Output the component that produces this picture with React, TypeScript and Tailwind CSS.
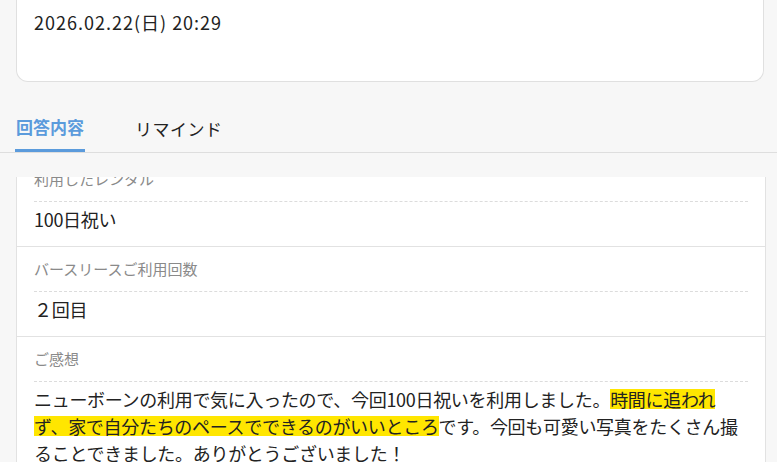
const rows = [
  { label: "利用したレンタル", value: "100日祝い" },
  { label: "バースリースご利用回数", value: "２回目" },
];

const Row = ({ label, children }: { label: string; children: React.ReactNode }) => {
  return (
    <div className="border-b border-[#e2e2e2] px-[17px] pt-[11px]">
      <p className="border-b border-dashed border-[#dcdcdc] pb-[11px] text-[15px] leading-[22px] text-[#8a8a8a]">
        {label}
      </p>
      <div className="pt-[4px] pb-[13px] text-[18px] leading-[27px] tracking-[-0.3px] text-[#222]">{children}</div>
    </div>
  );
};

const App = () => {
  return (
    <div
      className="h-[462px] w-full overflow-hidden bg-[#f7f7f7]"
      style={{ fontFamily: '"Noto Sans CJK JP", "Noto Sans", sans-serif' }}
    >
      <div className="ml-4 h-[82px] w-[748px] rounded-b-[12px] border border-t-0 border-[#e0e0e0] bg-white px-[17px] pt-[9px]">
        <p className="text-[18px] leading-[26px] tracking-[1px] text-[#222]">2026.02.22(日) 20:29</p>
      </div>

      <div className="mt-[22px] flex border-b border-[#dedede] pl-[15px]">
        <div className="flex h-[48px] w-[70px] items-center border-b-[3px] border-[#5b9bdc] pt-[1px] pl-px text-[17px] font-bold text-[#5b9bdc]">
          回答内容
        </div>
        <div className="ml-[50px] flex h-[48px] items-center pt-[1px] text-[17px] tracking-[0.5px] text-[#222]">
          リマインド
        </div>
      </div>

      <div className="mt-[24px] ml-4 h-[300px] w-[750px] overflow-hidden border-x border-[#e2e2e2] bg-white">
        <div className="-mt-[20px]">
          {rows.map((r) => (
            <Row key={r.label} label={r.label}>
              {r.value}
            </Row>
          ))}
          <Row label="ご感想">
            ニューボーンの利用で気に入ったので、今回100日祝いを利用しました。
            <span className="box-decoration-clone bg-[linear-gradient(transparent_12%,#ffe600_12%,#ffe600_90%,transparent_90%)]">
              時間に追われず、家で自分たちのペースでできるのがいいところ
            </span>
            です。今回も可愛い写真をたくさん撮ることできました。ありがとうございました！
          </Row>
        </div>
      </div>
    </div>
  );
};

export default App;
